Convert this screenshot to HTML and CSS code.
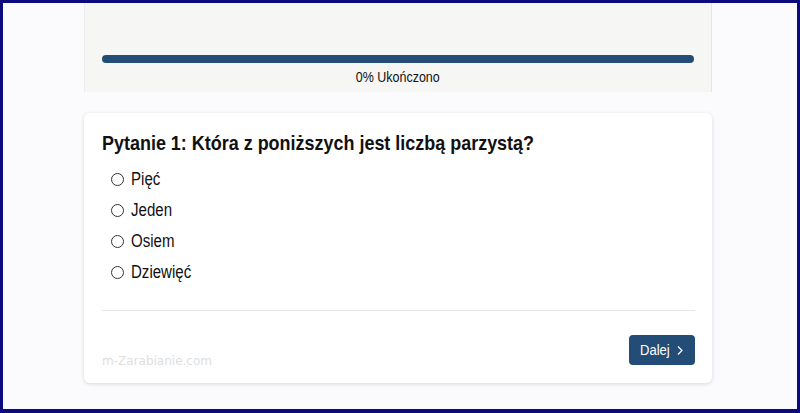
FILE: index.html
```html
<!DOCTYPE html>
<html lang="pl">
<head>
<meta charset="utf-8">
<title>Quiz</title>
<link rel="stylesheet" href="styles.css">
</head>
<body>
<div class="frame">
  <div class="wrap">
    <div class="progress-card">
      <div class="ghost"></div>
      <div class="bar"></div>
      <div class="progress-label"><span class="squeeze">0% Ukończono</span></div>
    </div>
    <div class="question-card">
      <h2 class="question"><span class="squeeze">Pytanie 1: Która z poniższych jest liczbą parzystą?</span></h2>
      <ul class="options">
        <li class="option"><span class="radio"></span><span class="squeeze">Pięć</span></li>
        <li class="option"><span class="radio"></span><span class="squeeze">Jeden</span></li>
        <li class="option"><span class="radio"></span><span class="squeeze">Osiem</span></li>
        <li class="option"><span class="radio"></span><span class="squeeze">Dziewięć</span></li>
      </ul>
      <div class="divider"></div>
      <div class="footer">
        <span class="watermark">m-Zarabianie.com</span>
        <button class="next"><span class="btn-text">Dalej</span><svg width="8" height="11" viewBox="0 0 8 11"><path d="M2 1.5 L6 5.5 L2 9.5" fill="none" stroke="#fff" stroke-width="1.2"/></svg></button>
      </div>
    </div>
  </div>
</div>
</body>
</html>
```

FILE: styles.css
```css
* { box-sizing: border-box; }
html, body { margin: 0; padding: 0; }
body {
  font-family: "Liberation Sans", Arial, sans-serif;
  color: #111;
  background: #fff;
}
.frame {
  width: 800px;
  height: 413px;
  border: 3px solid #0b0b7e;
  border-bottom-width: 4px;
  background: #fbfbfd;
  overflow: hidden;
}
.wrap {
  width: 628px;
  margin-left: 81px;
  display: flex;
  flex-direction: column;
  gap: 21px;
}
.squeeze {
  display: inline-block;
  transform-origin: left center;
  transform: scaleX(0.86);
  white-space: nowrap;
}
.progress-card {
  height: 89px;
  background: #f6f6f5;
  border-left: 1px solid #ececec;
  border-right: 1px solid #e6e6e6;
  padding: 0 17px 0 17px;
  display: flex;
  flex-direction: column;
}
.ghost {
  height: 52px;
}
.bar {
  height: 8px;
  border-radius: 4px;
  background: #234d76;
}
.progress-label {
  text-align: center;
  font-size: 14.5px;
  line-height: 17px;
  margin-top: 6px;
  color: #111;
}
.progress-label .squeeze {
  transform-origin: center center;
  transform: scaleX(0.86);
}
.question-card {
  height: 270px;
  background: #fff;
  border-radius: 6px;
  box-shadow: 0 1px 4px rgba(0,0,0,0.14);
  padding: 18px 17px 0 18px;
  display: flex;
  flex-direction: column;
}
.question {
  margin: 0;
  font-size: 21px;
  line-height: 24px;
  font-weight: bold;
  color: #111;
}
.question .squeeze {
  transform: scaleX(0.855);
}
.options {
  list-style: none;
  margin: 9px 0 0 0;
  padding: 0 0 0 9px;
  display: flex;
  flex-direction: column;
}
.option {
  height: 31px;
  display: flex;
  align-items: center;
  gap: 7px;
  font-size: 17.5px;
  color: #111;
}
.radio {
  width: 13px;
  height: 13px;
  border: 1.5px solid #333;
  border-radius: 50%;
  flex: none;
}
.divider {
  margin-top: 22px;
  height: 1px;
  background: #e6e6e6;
}
.footer {
  display: flex;
  justify-content: space-between;
  align-items: flex-start;
  padding-top: 24px;
}
.watermark {
  margin-top: 19px;
  font-size: 12px;
  color: #dedee0;
  font-family: "DejaVu Sans", sans-serif;
}
.next {
  background: #234d76;
  color: #fff;
  border: none;
  border-radius: 4px;
  height: 30px;
  width: 66px;
  padding: 0 0 0 11px;
  font-family: "Liberation Sans", Arial, sans-serif;
  font-size: 15.5px;
  display: flex;
  align-items: center;
}
.btn-text {
  display: inline-block;
  width: 35px;
  transform-origin: left center;
  transform: scaleX(0.84);
}
.next svg {
  flex: none;
  margin-left: 1px;
}
```
